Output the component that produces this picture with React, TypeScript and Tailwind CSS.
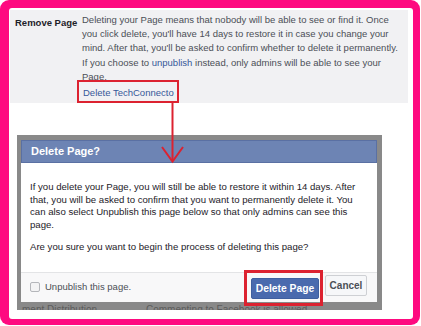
export default function App() {
  return (
    <div className="w-[421px] h-[326px] bg-white font-['Liberation_Sans',Arial,sans-serif]">
      <div className="relative w-[420px] h-[325px] rounded-[9px] bg-[#fe0a80] pt-[8px] pl-[9px] pr-[7px] pb-[6px]">
        <div className="h-full rounded-[3px] bg-white pt-[2px] pl-[1px] pr-[5px]">
          {/* settings row */}
          <div className="flex h-[93px] bg-[#f1f1f3]">
            <div className="w-[72px] shrink-0 pl-[5px] pt-[6px] text-[9.5px] leading-[14.2px] font-bold text-[#1d2129]">
              Remove Page
            </div>
            <div className="w-[322px] pt-[3px] text-[9.5px] leading-[14.2px] text-[#4b4f56]">
              <p>
                Deleting your Page means that nobody will be able to see or find it. Once you click delete,
                you'll have 14 days to restore it in case you change your mind. After that, you'll be asked to
                confirm whether to delete it permanently. If you choose to <span className="text-[#365899]">unpublish</span> instead,
                only admins will be able to see your Page.
              </p>
              <div className="mt-[2px] pl-[1px]">
                <span className="relative inline-block text-[#365899]">
                  Delete TechConnecto
                  <span className="absolute left-[-6px] top-[-6px] right-[-5px] bottom-[-3px] border-2 border-[#dc2230]" />
                </span>
              </div>
            </div>
          </div>

          {/* dialog */}
          <div className="mt-[32px] ml-[7px] w-[365px] bg-[#898989] pt-[5px] pl-[4px] pr-[5px]">
            <div className="h-[23px] bg-[#6d84b4] border border-[#5a70a3] pl-[9px] text-[11px] leading-[21px] font-bold text-white">
              Delete Page?
            </div>
            <div className="bg-white px-[9px] pt-[18px] pb-[18px] text-[9.6px] leading-[12.7px] text-[#1d2129]">
              <p className="mb-[9px]">
                If you delete your Page, you will still be able to restore it within 14 days. After that, you will
                be asked to confirm that you want to permanently delete it. You can also select Unpublish this page
                below so that only admins can see this page.
              </p>
              <p>Are you sure you want to begin the process of deleting this page?</p>
            </div>
            <div className="flex h-[30px] items-center border-t border-[#e3e4e6] bg-[#f8f8f9] pl-[9px] pr-[10px]">
              <div className="w-[10px] h-[10px] rounded-[2px] border border-[#b4b6ba] bg-[#f3f3f4]" />
              <span className="ml-[5px] text-[9.5px] text-[#4b4f56]">Unpublish this page.</span>
              <div className="ml-auto flex gap-[6px]">
                <div className="relative">
                  <button className="h-[21px] w-[68px] rounded-[2px] border border-[#3f5f9f] bg-[#4a6aae] text-[10.3px] font-bold text-white">
                    Delete Page
                  </button>
                  <span className="absolute left-[-7px] top-[-5px] right-[-4px] bottom-[-7px] border-[3px] border-[#dc2230]" />
                </div>
                <button className="h-[21px] w-[42px] rounded-[2px] border border-[#ced0d4] bg-[#f6f7f9] text-[10px] font-bold text-[#4b4f56]">
                  Cancel
                </button>
              </div>
            </div>
            <div className="flex h-[8px] overflow-hidden pt-[2px] text-[10px] leading-[12px] text-[#5c5c5c]">
              <span className="w-[125px] shrink-0 pl-[1px]">ment Distribution</span>
              <span>Commenting to Facebook is allowed</span>
            </div>
          </div>
        </div>

        {/* annotation arrow */}
        <svg className="absolute left-0 top-0 pointer-events-none" width="420" height="325">
          <line x1="172.5" y1="103" x2="172.5" y2="161" stroke="#dc2230" strokeWidth="2" />
          <polyline points="162,147 172.5,161.5 183,147" fill="none" stroke="#dc2230" strokeWidth="2" />
        </svg>
      </div>
    </div>
  )
}
